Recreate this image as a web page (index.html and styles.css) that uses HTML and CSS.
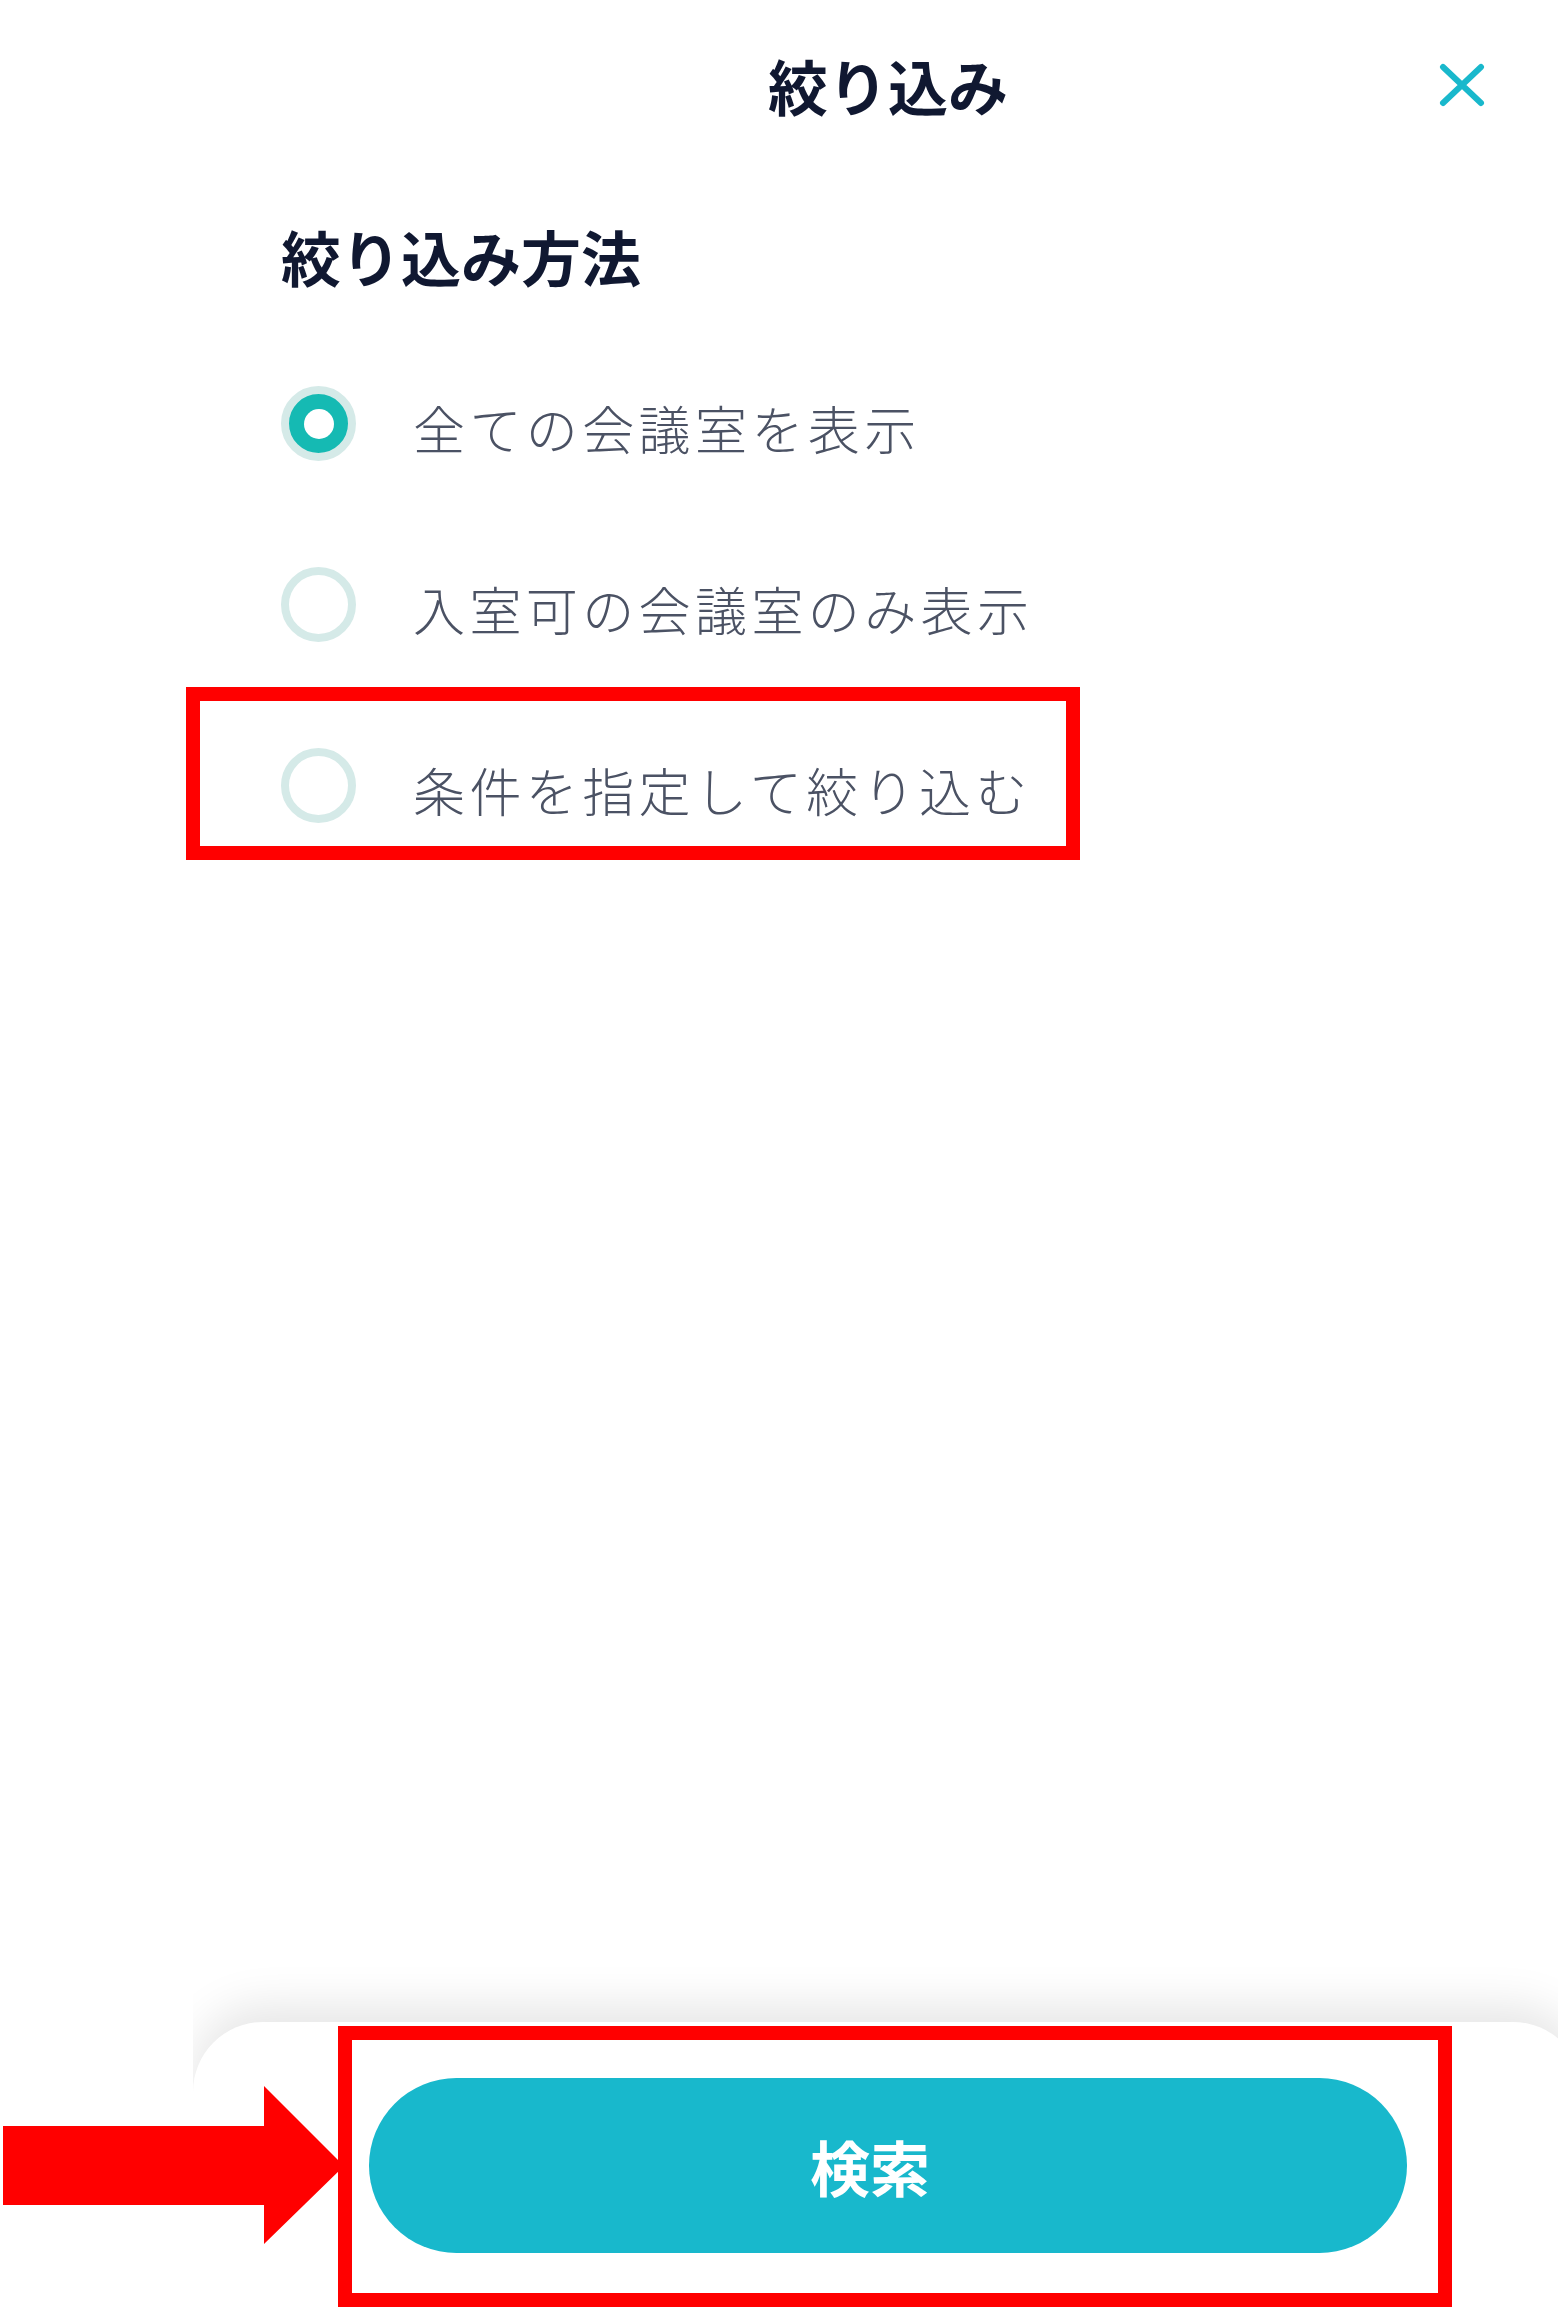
FILE: index.html
```html
<!DOCTYPE html>
<html lang="ja">

<head>
    <meta charset="UTF-8">
    <meta name="viewport" content="width=device-width, initial-scale=1.0">
    <title>絞り込み</title>
    <link rel="stylesheet" href="styles.css">
</head>

<body>
    <div class="screen">
        <div class="header">
            <span></span>
            <h1 class="title">絞り込み</h1>
            <button class="close" type="button">
                <svg width="48" height="44" viewBox="0 0 48 44">
                    <path d="M5 4 L43 40 M43 4 L5 40" stroke="#19b8cc" stroke-width="6" stroke-linecap="round" fill="none" />
                </svg>
            </button>
        </div>

        <div class="content">
            <h2 class="section-title">絞り込み方法</h2>
            <ul class="options">
                <li class="option">
                    <span class="radio checked"></span>
                    <span class="label">全ての会議室を表示</span>
                </li>
                <li class="option">
                    <span class="radio"></span>
                    <span class="label">入室可の会議室のみ表示</span>
                </li>
                <li class="option">
                    <span class="radio"></span>
                    <span class="label">条件を指定して絞り込む</span>
                </li>
            </ul>
        </div>

        <div class="footer">
            <button class="search" type="button">検索</button>
        </div>
    </div>

    <div class="marks">
        <div class="mark mark-option"></div>
        <div class="mark mark-search"></div>
        <svg class="arrow" width="350" height="160" viewBox="0 0 350 160">
            <polygon points="0,40 261,40 261,0 341,80 261,158 261,119 0,119" fill="#ff0000" />
        </svg>
    </div>
</body>

</html>
```

FILE: styles.css
```css
html,
body {
    margin: 0;
    padding: 0;
    overflow: hidden;
    background-color: #fff;
}

body {
    position: relative;
    font-family: "Noto Sans CJK JP", "Noto Sans", sans-serif;
}

ul {
    margin: 0;
    padding: 0;
    list-style: none;
}

.screen {
    display: flex;
    flex-direction: column;
    margin-left: 193px;
    width: 1390px;
    height: 2310px;
    overflow: hidden;
}

.header {
    display: grid;
    grid-template-columns: 1fr auto 1fr;
    align-items: center;
    height: 170px;
    padding: 0 97px;
}

.title {
    margin: 0;
    font-size: 60px;
    line-height: 60px;
    font-weight: 700;
    color: #101831;
}

.close {
    justify-self: end;
    display: flex;
    padding: 0;
    border: 0;
    background: none;
}

.content {
    padding-left: 88px;
}

.section-title {
    margin: 56px 0 0;
    font-size: 60px;
    line-height: 60px;
    font-weight: 700;
    color: #101831;
}

.options {
    margin-top: 47px;
}

.option {
    display: flex;
    align-items: center;
    height: 181px;
}

.radio {
    display: flex;
    align-items: center;
    justify-content: center;
    box-sizing: border-box;
    width: 75px;
    height: 75px;
    border: 8px solid #d5eae8;
    border-radius: 50%;
    background-color: #fff;
}

.radio.checked {
    background-color: #15bab3;
}

.radio.checked::after {
    content: "";
    width: 30px;
    height: 30px;
    border-radius: 50%;
    background-color: #fff;
}

.label {
    margin-left: 57px;
    padding-top: 8px;
    font-size: 52px;
    line-height: 60px;
    font-weight: 300;
    letter-spacing: 4.4px;
    color: #4b5264;
}

.footer {
    margin-top: auto;
    height: 288px;
    box-sizing: border-box;
    padding: 56px 176px 0;
    border-radius: 70px 70px 0 0;
    background-color: #fff;
    box-shadow: 0 -16px 46px rgba(0, 0, 0, 0.1);
}

.search {
    display: block;
    width: 100%;
    height: 175px;
    padding: 0 36px 0 0;
    border: 0;
    border-radius: 88px;
    background-color: #18b8cc;
    font-family: "Noto Sans CJK JP", "Noto Sans", sans-serif;
    font-size: 60px;
    font-weight: 700;
    color: #fff;
}

/* annotation marks drawn over the screenshot */
.marks {
    position: absolute;
    top: 0;
    left: 0;
    width: 1558px;
    height: 2310px;
    pointer-events: none;
}

.mark {
    position: absolute;
    box-sizing: border-box;
    border: 14px solid #ff0000;
}

.mark-option {
    left: 186px;
    top: 687px;
    width: 894px;
    height: 173px;
}

.mark-search {
    left: 338px;
    top: 2026px;
    width: 1114px;
    height: 281px;
}

.arrow {
    position: absolute;
    left: 3px;
    top: 2086px;
}
```
